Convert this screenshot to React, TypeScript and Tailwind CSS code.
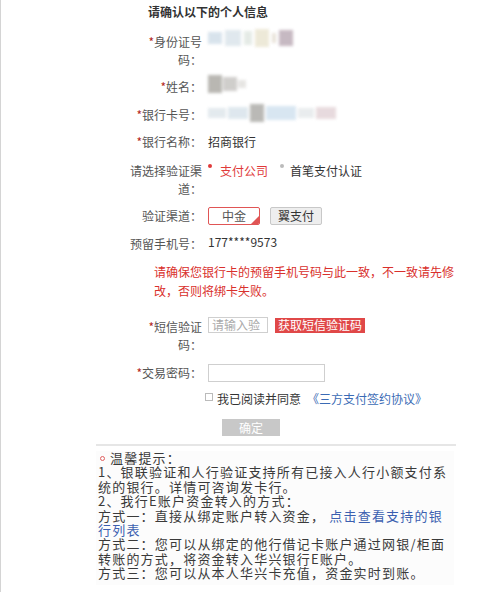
import React from "react";

function Label({ star, text }: { star?: boolean; text: string }) {
  return (
    <div className="w-[72px] shrink-0 text-right leading-[18px] text-[#555]">
      {star && <span className="text-[#b3261e]">*</span>}
      {text}
    </div>
  );
}

function Row({ star, label, className, children }: { star?: boolean; label: string; className?: string; children?: React.ReactNode }) {
  return (
    <div className={"flex " + (className ?? "")}>
      <Label star={star} text={label} />
      <div className="ml-[6px] flex items-start">{children}</div>
    </div>
  );
}

// stand-in for the masked personal data (blurred scans in the original)
function Smudge({ colors, className }: { colors: string[]; className?: string }) {
  return (
    <div className={"flex items-center blur-[1.5px] opacity-80 " + (className ?? "")}>
      {colors.map((c, i) => (
        <div key={i} className={c} />
      ))}
    </div>
  );
}

export default function App() {
  return (
    <div className="w-[496px] h-[592px] bg-white border-l border-[#d4d4d4] font-['Noto_Sans_CJK_SC',sans-serif] text-[12px] text-[#333] overflow-hidden">
      <div className="pl-[129px] pt-[3px]">
        <div className="ml-[18px] font-bold leading-[18px] text-[#333]">请确认以下的个人信息</div>

        <Row star label="身份证号码：" className="mt-[12px]">
          <Smudge
            className="-mt-[6px] h-[22px] gap-[3px]"
            colors={[
              "w-[14px] h-[12px] bg-[#cfdde8]",
              "w-[16px] h-[16px] bg-[#d9e3ea]",
              "w-[8px] h-[14px] bg-[#dfe6e0]",
              "w-[14px] h-[18px] bg-[#e9e4cf]",
              "w-[4px] h-[10px] bg-[#e3ddd0]",
              "w-[14px] h-[16px] bg-[#b9a8b4]",
            ]}
          />
        </Row>

        <Row star label="姓名：" className="mt-[9px]">
          <Smudge
            className="-mt-[6px] h-[24px] gap-[1px]"
            colors={["w-[14px] h-[18px] bg-[#a8a6a0]", "w-[14px] h-[14px] bg-[#c4c2bf]", "w-[8px] h-[8px] bg-[#e0dfdc]"]}
          />
        </Row>

        <Row star label="银行卡号：" className="mt-[10px]">
          <Smudge
            className="-mt-[4px] h-[22px] gap-[2px]"
            colors={[
              "w-[18px] h-[10px] bg-[#dde5ea]",
              "w-[20px] h-[12px] bg-[#d7e2ea]",
              "w-[14px] h-[18px] bg-[#a9a8a4]",
              "w-[30px] h-[14px] bg-[#cfe0ee]",
              "w-[16px] h-[10px] bg-[#e4e8ea]",
              "w-[20px] h-[12px] bg-[#e2d2d6]",
            ]}
          />
        </Row>

        <Row star label="银行名称：" className="mt-[9px]">
          <span className="leading-[18px]">招商银行</span>
        </Row>

        <Row label="请选择验证渠道：" className="mt-[11px]">
          <div className="flex items-start leading-[18px]">
            <span className="mt-[2px] h-[4px] w-[4px] rounded-full bg-[#e03a3a]" />
            <span className="ml-[8px] text-[#e03a3a]">支付公司</span>
            <span className="ml-[12px] mt-[2px] h-[4px] w-[4px] rounded-full bg-[#bbb]" />
            <span className="ml-[6px]">首笔支付认证</span>
          </div>
        </Row>

        <div className="mt-[9px] flex items-center">
          <Label text="验证渠道：" />
          <div className="ml-[6px] flex items-center gap-[10px]">
            <div className="relative flex h-[18px] w-[52px] items-center justify-center overflow-hidden rounded-[2px] border border-[#e05555] bg-white text-[#555]">
              中金
              <span className="absolute -bottom-[1px] -right-[1px] h-0 w-0 border-b-[10px] border-l-[10px] border-b-[#e05555] border-l-transparent" />
            </div>
            <div className="flex h-[18px] w-[52px] items-center justify-center rounded-[2px] border border-[#c8c8c8] bg-[#eeeeee] text-[#333]">
              翼支付
            </div>
          </div>
        </div>

        <Row label="预留手机号：" className="mt-[10px]">
          <span className="-mt-[2px] leading-[18px]">177****9573</span>
        </Row>

        <p className="ml-[24px] mt-[9px] w-[304px] leading-[19px] text-[#d9302c]">
          请确保您银行卡的预留手机号码与此一致，不一致请先修改，否则将绑卡失败。
        </p>

        <Row star label="短信验证码：" className="mt-[18px]">
          <div className="-mt-[1px] flex items-center gap-[7px]">
            <div className="flex h-[16px] w-[60px] items-center whitespace-nowrap border border-[#cfcfcf] px-[3px] text-[#aaa] leading-[14px]">
              请输入验
            </div>
            <button className="flex h-[15px] items-center bg-[#e04848] px-[3px] text-white leading-[14px]">获取短信验证码</button>
          </div>
        </Row>

        <div className="mt-[10px] flex items-center">
          <Label star text="交易密码：" />
          <div className="ml-[6px] h-[18px] w-[117px] border border-[#cfcfcf] bg-white" />
        </div>

        <div className="ml-[75px] mt-[8px] flex items-center leading-[18px]">
          <span className="mb-[4px] h-[8px] w-[8px] border border-[#bbb] bg-white" />
          <span className="ml-[4px]">我已阅读并同意</span>
          <span className="ml-[6px] text-[#3b6bb5]">《三方支付签约协议》</span>
        </div>

        <div className="ml-[92px] mt-[11px] flex h-[17px] w-[58px] items-center justify-center bg-[#c8c8c8] text-white">确定</div>
      </div>

      <div className="ml-[95px] mt-[8px] h-[2px] w-[360px] bg-[#e6e6e6]" />

      <div className="ml-[95px] mt-[5px] w-[358px] bg-[#fcfcfc] px-[2px] pb-[4px] text-[13px] tracking-[1.2px] leading-[14.4px] text-[#3a3a3a]">
        <div className="flex items-center">
          <span className="mx-[2px] h-[5px] w-[5px] rounded-full border border-[#e06060]" />
          <span className="ml-[3px]">温馨提示：</span>
        </div>
        <p className="w-[354px]">1、银联验证和人行验证支持所有已接入人行小额支付系统的银行。详情可咨询发卡行。</p>
        <p className="w-[354px]">2、我行E账户资金转入的方式：</p>
        <p className="w-[354px]">
          方式一：直接从绑定账户转入资金， <span className="text-[#3b5fb0]">点击查看支持的银行列表</span>
        </p>
        <p className="w-[354px]">方式二：您可以从绑定的他行借记卡账户通过网银/柜面转账的方式，将资金转入华兴银行E账户。</p>
        <p className="w-[354px]">方式三：您可以从本人华兴卡充值，资金实时到账。</p>
      </div>
    </div>
  );
}
